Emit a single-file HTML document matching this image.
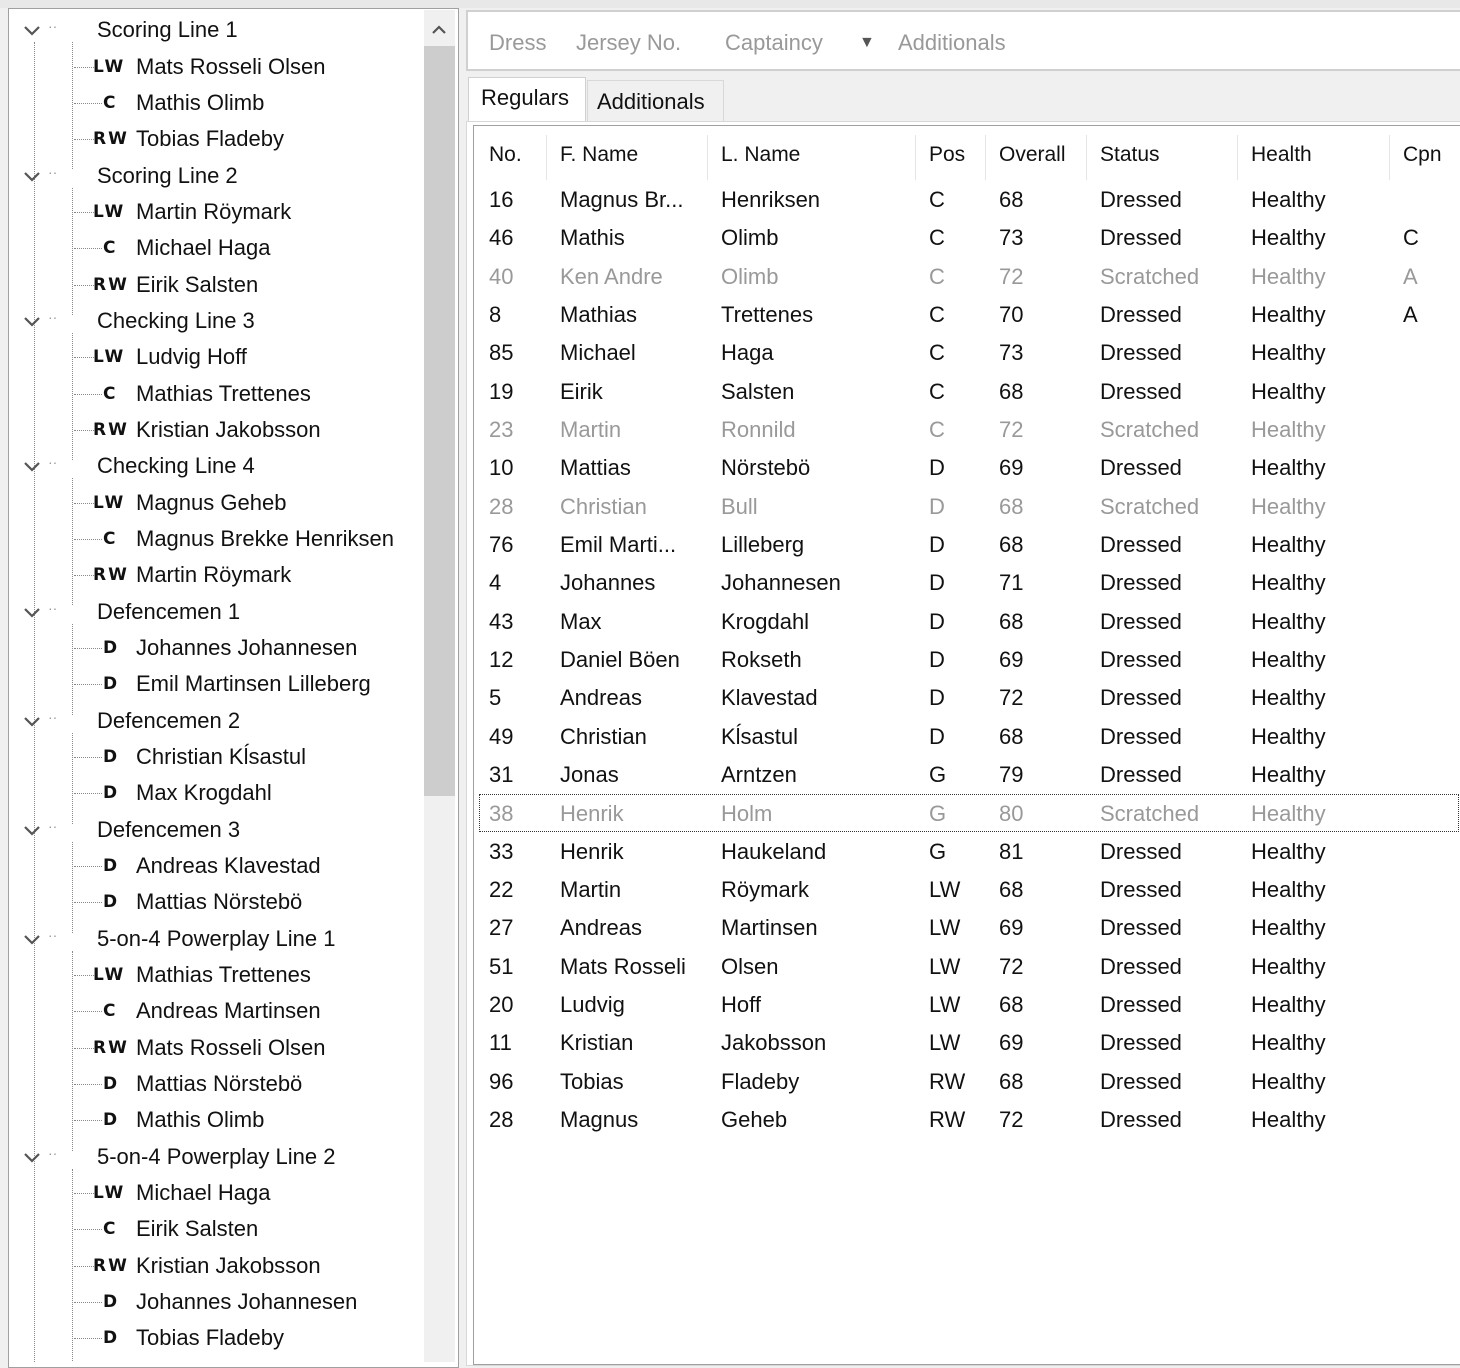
<!DOCTYPE html>
<html><head><meta charset="utf-8"><style>
*{margin:0;padding:0;box-sizing:border-box}
body{width:1460px;height:1362px;background:#f0f0f0;font-family:"Liberation Sans",sans-serif;font-size:22px;color:#111;position:relative;overflow:hidden}
.abs{position:absolute}
#left{left:8px;top:8px;width:451px;height:1360px;background:#fff;border:1px solid #a0a0a0}
#sb{left:424px;top:10px;width:31px;height:1352px;background:#f0f0f0}
#thumb{left:424px;top:46px;width:31px;height:750px;background:#cdcdcd}
.vl{position:absolute;border-left:1px dotted #888;width:0}
#tb{left:466px;top:10px;width:1000px;height:61px;background:#fff;border:2px solid #d0d0d0;color:#999;line-height:62px}
#tb span{position:absolute;top:0}
#grid{left:473px;top:125px;width:995px;height:1240px;background:#fff;border:1px solid #a0a0a0}
.hd{position:absolute;top:130px;height:50px;line-height:50px;font-size:21px}
.sep{position:absolute;top:135px;height:45px;border-left:1px solid #e5e5e5}
.row{position:absolute;left:474px;width:986px;height:38.33px;line-height:38px}
.row span{position:absolute}
.s{color:#999}
.c1{left:15px}.c2{left:86px}.c3{left:247px}.c4{left:455px}.c5{left:525px}.c6{left:626px}.c7{left:777px}.c8{left:929px}
.g{position:absolute;left:0;width:424px;height:36px;line-height:36px;white-space:nowrap}
.g svg{position:absolute;left:23px;top:12px}
.g .dd{position:absolute;left:48px;top:-4px;color:#999;font-size:14px}
.g .gl{position:absolute;left:97px}
.g .h{position:absolute;left:74px;top:18px;width:20px;border-top:1px dotted #888}
.g .h.s1{width:28px}
.g .r{position:absolute;left:93px;font-family:"DejaVu Sans",sans-serif;font-weight:bold;font-size:17px;letter-spacing:2px}
.g .r.o{left:103px}
.g .n{position:absolute;left:136px}
</style></head><body>
<div class="abs" style="left:0;top:0;width:1460px;height:8px;background:#e8e8e8"></div>
<div id="left" class="abs"></div>
<div id="sb" class="abs"></div>
<div id="thumb" class="abs"></div>
<svg class="abs" style="left:431px;top:24px" width="16" height="12"><polyline points="2,9 8,3 14,9" fill="none" stroke="#555" stroke-width="2.2"/></svg>

<div class="abs" style="left:0;top:12px;width:424px;height:1350px;overflow:hidden">
<div class="vl" style="left:34px;top:30px;height:1330px"></div>
<div class="vl" style="left:72px;top:30px;height:127px"></div>
<div class="vl" style="left:72px;top:176px;height:127px"></div>
<div class="vl" style="left:72px;top:321px;height:127px"></div>
<div class="vl" style="left:72px;top:466px;height:127px"></div>
<div class="vl" style="left:72px;top:612px;height:91px"></div>
<div class="vl" style="left:72px;top:721px;height:91px"></div>
<div class="vl" style="left:72px;top:830px;height:91px"></div>
<div class="vl" style="left:72px;top:939px;height:200px"></div>
<div class="vl" style="left:72px;top:1157px;height:200px"></div>
</div>

<div class="abs" style="left:0;top:0;width:424px;height:1362px;overflow:hidden">
<div class="g" style="top:12px"><svg width="18" height="12"><polyline points="2,3 9,10 16,3" fill="none" stroke="#555" stroke-width="2.2"/></svg><span class="dd">··</span><span class="gl">Scoring Line 1</span></div>
<div class="g" style="top:49px"><span class="h"></span><span class="r">LW</span><span class="n">Mats Rosseli Olsen</span></div>
<div class="g" style="top:85px"><span class="h s1"></span><span class="r o">C</span><span class="n">Mathis Olimb</span></div>
<div class="g" style="top:121px"><span class="h"></span><span class="r">RW</span><span class="n">Tobias Fladeby</span></div>
<div class="g" style="top:158px"><svg width="18" height="12"><polyline points="2,3 9,10 16,3" fill="none" stroke="#555" stroke-width="2.2"/></svg><span class="dd">··</span><span class="gl">Scoring Line 2</span></div>
<div class="g" style="top:194px"><span class="h"></span><span class="r">LW</span><span class="n">Martin Röymark</span></div>
<div class="g" style="top:230px"><span class="h s1"></span><span class="r o">C</span><span class="n">Michael Haga</span></div>
<div class="g" style="top:267px"><span class="h"></span><span class="r">RW</span><span class="n">Eirik Salsten</span></div>
<div class="g" style="top:303px"><svg width="18" height="12"><polyline points="2,3 9,10 16,3" fill="none" stroke="#555" stroke-width="2.2"/></svg><span class="dd">··</span><span class="gl">Checking Line 3</span></div>
<div class="g" style="top:339px"><span class="h"></span><span class="r">LW</span><span class="n">Ludvig Hoff</span></div>
<div class="g" style="top:376px"><span class="h s1"></span><span class="r o">C</span><span class="n">Mathias Trettenes</span></div>
<div class="g" style="top:412px"><span class="h"></span><span class="r">RW</span><span class="n">Kristian Jakobsson</span></div>
<div class="g" style="top:448px"><svg width="18" height="12"><polyline points="2,3 9,10 16,3" fill="none" stroke="#555" stroke-width="2.2"/></svg><span class="dd">··</span><span class="gl">Checking Line 4</span></div>
<div class="g" style="top:485px"><span class="h"></span><span class="r">LW</span><span class="n">Magnus Geheb</span></div>
<div class="g" style="top:521px"><span class="h s1"></span><span class="r o">C</span><span class="n">Magnus Brekke Henriksen</span></div>
<div class="g" style="top:557px"><span class="h"></span><span class="r">RW</span><span class="n">Martin Röymark</span></div>
<div class="g" style="top:594px"><svg width="18" height="12"><polyline points="2,3 9,10 16,3" fill="none" stroke="#555" stroke-width="2.2"/></svg><span class="dd">··</span><span class="gl">Defencemen 1</span></div>
<div class="g" style="top:630px"><span class="h s1"></span><span class="r o">D</span><span class="n">Johannes Johannesen</span></div>
<div class="g" style="top:666px"><span class="h s1"></span><span class="r o">D</span><span class="n">Emil Martinsen Lilleberg</span></div>
<div class="g" style="top:703px"><svg width="18" height="12"><polyline points="2,3 9,10 16,3" fill="none" stroke="#555" stroke-width="2.2"/></svg><span class="dd">··</span><span class="gl">Defencemen 2</span></div>
<div class="g" style="top:739px"><span class="h s1"></span><span class="r o">D</span><span class="n">Christian Kĺsastul</span></div>
<div class="g" style="top:775px"><span class="h s1"></span><span class="r o">D</span><span class="n">Max Krogdahl</span></div>
<div class="g" style="top:812px"><svg width="18" height="12"><polyline points="2,3 9,10 16,3" fill="none" stroke="#555" stroke-width="2.2"/></svg><span class="dd">··</span><span class="gl">Defencemen 3</span></div>
<div class="g" style="top:848px"><span class="h s1"></span><span class="r o">D</span><span class="n">Andreas Klavestad</span></div>
<div class="g" style="top:884px"><span class="h s1"></span><span class="r o">D</span><span class="n">Mattias Nörstebö</span></div>
<div class="g" style="top:921px"><svg width="18" height="12"><polyline points="2,3 9,10 16,3" fill="none" stroke="#555" stroke-width="2.2"/></svg><span class="dd">··</span><span class="gl">5-on-4 Powerplay Line 1</span></div>
<div class="g" style="top:957px"><span class="h"></span><span class="r">LW</span><span class="n">Mathias Trettenes</span></div>
<div class="g" style="top:993px"><span class="h s1"></span><span class="r o">C</span><span class="n">Andreas Martinsen</span></div>
<div class="g" style="top:1030px"><span class="h"></span><span class="r">RW</span><span class="n">Mats Rosseli Olsen</span></div>
<div class="g" style="top:1066px"><span class="h s1"></span><span class="r o">D</span><span class="n">Mattias Nörstebö</span></div>
<div class="g" style="top:1102px"><span class="h s1"></span><span class="r o">D</span><span class="n">Mathis Olimb</span></div>
<div class="g" style="top:1139px"><svg width="18" height="12"><polyline points="2,3 9,10 16,3" fill="none" stroke="#555" stroke-width="2.2"/></svg><span class="dd">··</span><span class="gl">5-on-4 Powerplay Line 2</span></div>
<div class="g" style="top:1175px"><span class="h"></span><span class="r">LW</span><span class="n">Michael Haga</span></div>
<div class="g" style="top:1211px"><span class="h s1"></span><span class="r o">C</span><span class="n">Eirik Salsten</span></div>
<div class="g" style="top:1248px"><span class="h"></span><span class="r">RW</span><span class="n">Kristian Jakobsson</span></div>
<div class="g" style="top:1284px"><span class="h s1"></span><span class="r o">D</span><span class="n">Johannes Johannesen</span></div>
<div class="g" style="top:1320px"><span class="h s1"></span><span class="r o">D</span><span class="n">Tobias Fladeby</span></div>
</div>

<div id="tb" class="abs"><span style="left:21px">Dress</span><span style="left:108px">Jersey No.</span><span style="left:257px">Captaincy</span><span style="left:391px;font-size:16px;color:#555">&#9660;</span><span style="left:430px">Additionals</span></div>

<div class="abs" style="left:468px;top:77px;width:118px;height:50px;background:#fff;border:1px solid #d0d0d0;border-bottom:none;line-height:40px;padding-left:12px">Regulars</div>
<div class="abs" style="left:587px;top:80px;width:137px;height:42px;background:#f0f0f0;border:1px solid #d8d8d8;border-bottom:none;line-height:42px;padding-left:9px">Additionals</div>
<div class="abs" style="left:466px;top:121px;width:1000px;height:1245px;background:#fff;border:1px solid #d8d8d8"></div>
<div id="grid" class="abs"></div>

<div class="hd" style="left:489px">No.</div>
<div class="hd" style="left:560px">F. Name</div>
<div class="hd" style="left:721px">L. Name</div>
<div class="hd" style="left:929px">Pos</div>
<div class="hd" style="left:999px">Overall</div>
<div class="hd" style="left:1100px">Status</div>
<div class="hd" style="left:1251px">Health</div>
<div class="hd" style="left:1403px">Cpn</div>
<div class="sep" style="left:546px"></div><div class="sep" style="left:707px"></div><div class="sep" style="left:915px"></div><div class="sep" style="left:985px"></div><div class="sep" style="left:1086px"></div><div class="sep" style="left:1237px"></div><div class="sep" style="left:1389px"></div>

<div class="row" style="top:181px"><span class="c1">16</span><span class="c2">Magnus Br...</span><span class="c3">Henriksen</span><span class="c4">C</span><span class="c5">68</span><span class="c6">Dressed</span><span class="c7">Healthy</span></div>
<div class="row" style="top:219px"><span class="c1">46</span><span class="c2">Mathis</span><span class="c3">Olimb</span><span class="c4">C</span><span class="c5">73</span><span class="c6">Dressed</span><span class="c7">Healthy</span><span class="c8">C</span></div>
<div class="row s" style="top:258px"><span class="c1">40</span><span class="c2">Ken Andre</span><span class="c3">Olimb</span><span class="c4">C</span><span class="c5">72</span><span class="c6">Scratched</span><span class="c7">Healthy</span><span class="c8">A</span></div>
<div class="row" style="top:296px"><span class="c1">8</span><span class="c2">Mathias</span><span class="c3">Trettenes</span><span class="c4">C</span><span class="c5">70</span><span class="c6">Dressed</span><span class="c7">Healthy</span><span class="c8">A</span></div>
<div class="row" style="top:334px"><span class="c1">85</span><span class="c2">Michael</span><span class="c3">Haga</span><span class="c4">C</span><span class="c5">73</span><span class="c6">Dressed</span><span class="c7">Healthy</span></div>
<div class="row" style="top:373px"><span class="c1">19</span><span class="c2">Eirik</span><span class="c3">Salsten</span><span class="c4">C</span><span class="c5">68</span><span class="c6">Dressed</span><span class="c7">Healthy</span></div>
<div class="row s" style="top:411px"><span class="c1">23</span><span class="c2">Martin</span><span class="c3">Ronnild</span><span class="c4">C</span><span class="c5">72</span><span class="c6">Scratched</span><span class="c7">Healthy</span></div>
<div class="row" style="top:449px"><span class="c1">10</span><span class="c2">Mattias</span><span class="c3">Nörstebö</span><span class="c4">D</span><span class="c5">69</span><span class="c6">Dressed</span><span class="c7">Healthy</span></div>
<div class="row s" style="top:488px"><span class="c1">28</span><span class="c2">Christian</span><span class="c3">Bull</span><span class="c4">D</span><span class="c5">68</span><span class="c6">Scratched</span><span class="c7">Healthy</span></div>
<div class="row" style="top:526px"><span class="c1">76</span><span class="c2">Emil Marti...</span><span class="c3">Lilleberg</span><span class="c4">D</span><span class="c5">68</span><span class="c6">Dressed</span><span class="c7">Healthy</span></div>
<div class="row" style="top:564px"><span class="c1">4</span><span class="c2">Johannes</span><span class="c3">Johannesen</span><span class="c4">D</span><span class="c5">71</span><span class="c6">Dressed</span><span class="c7">Healthy</span></div>
<div class="row" style="top:603px"><span class="c1">43</span><span class="c2">Max</span><span class="c3">Krogdahl</span><span class="c4">D</span><span class="c5">68</span><span class="c6">Dressed</span><span class="c7">Healthy</span></div>
<div class="row" style="top:641px"><span class="c1">12</span><span class="c2">Daniel Böen</span><span class="c3">Rokseth</span><span class="c4">D</span><span class="c5">69</span><span class="c6">Dressed</span><span class="c7">Healthy</span></div>
<div class="row" style="top:679px"><span class="c1">5</span><span class="c2">Andreas</span><span class="c3">Klavestad</span><span class="c4">D</span><span class="c5">72</span><span class="c6">Dressed</span><span class="c7">Healthy</span></div>
<div class="row" style="top:718px"><span class="c1">49</span><span class="c2">Christian</span><span class="c3">Kĺsastul</span><span class="c4">D</span><span class="c5">68</span><span class="c6">Dressed</span><span class="c7">Healthy</span></div>
<div class="row" style="top:756px"><span class="c1">31</span><span class="c2">Jonas</span><span class="c3">Arntzen</span><span class="c4">G</span><span class="c5">79</span><span class="c6">Dressed</span><span class="c7">Healthy</span></div>
<div class="row s" style="top:794px;left:479px;width:980px;border:1px dotted #333"><span class="c1" style="left:9px">38</span><span style="left:80px">Henrik</span><span style="left:241px">Holm</span><span style="left:449px">G</span><span style="left:519px">80</span><span style="left:620px">Scratched</span><span style="left:771px">Healthy</span></div>
<div class="row" style="top:833px"><span class="c1">33</span><span class="c2">Henrik</span><span class="c3">Haukeland</span><span class="c4">G</span><span class="c5">81</span><span class="c6">Dressed</span><span class="c7">Healthy</span></div>
<div class="row" style="top:871px"><span class="c1">22</span><span class="c2">Martin</span><span class="c3">Röymark</span><span class="c4">LW</span><span class="c5">68</span><span class="c6">Dressed</span><span class="c7">Healthy</span></div>
<div class="row" style="top:909px"><span class="c1">27</span><span class="c2">Andreas</span><span class="c3">Martinsen</span><span class="c4">LW</span><span class="c5">69</span><span class="c6">Dressed</span><span class="c7">Healthy</span></div>
<div class="row" style="top:948px"><span class="c1">51</span><span class="c2">Mats Rosseli</span><span class="c3">Olsen</span><span class="c4">LW</span><span class="c5">72</span><span class="c6">Dressed</span><span class="c7">Healthy</span></div>
<div class="row" style="top:986px"><span class="c1">20</span><span class="c2">Ludvig</span><span class="c3">Hoff</span><span class="c4">LW</span><span class="c5">68</span><span class="c6">Dressed</span><span class="c7">Healthy</span></div>
<div class="row" style="top:1024px"><span class="c1">11</span><span class="c2">Kristian</span><span class="c3">Jakobsson</span><span class="c4">LW</span><span class="c5">69</span><span class="c6">Dressed</span><span class="c7">Healthy</span></div>
<div class="row" style="top:1063px"><span class="c1">96</span><span class="c2">Tobias</span><span class="c3">Fladeby</span><span class="c4">RW</span><span class="c5">68</span><span class="c6">Dressed</span><span class="c7">Healthy</span></div>
<div class="row" style="top:1101px"><span class="c1">28</span><span class="c2">Magnus</span><span class="c3">Geheb</span><span class="c4">RW</span><span class="c5">72</span><span class="c6">Dressed</span><span class="c7">Healthy</span></div>
</body></html>
